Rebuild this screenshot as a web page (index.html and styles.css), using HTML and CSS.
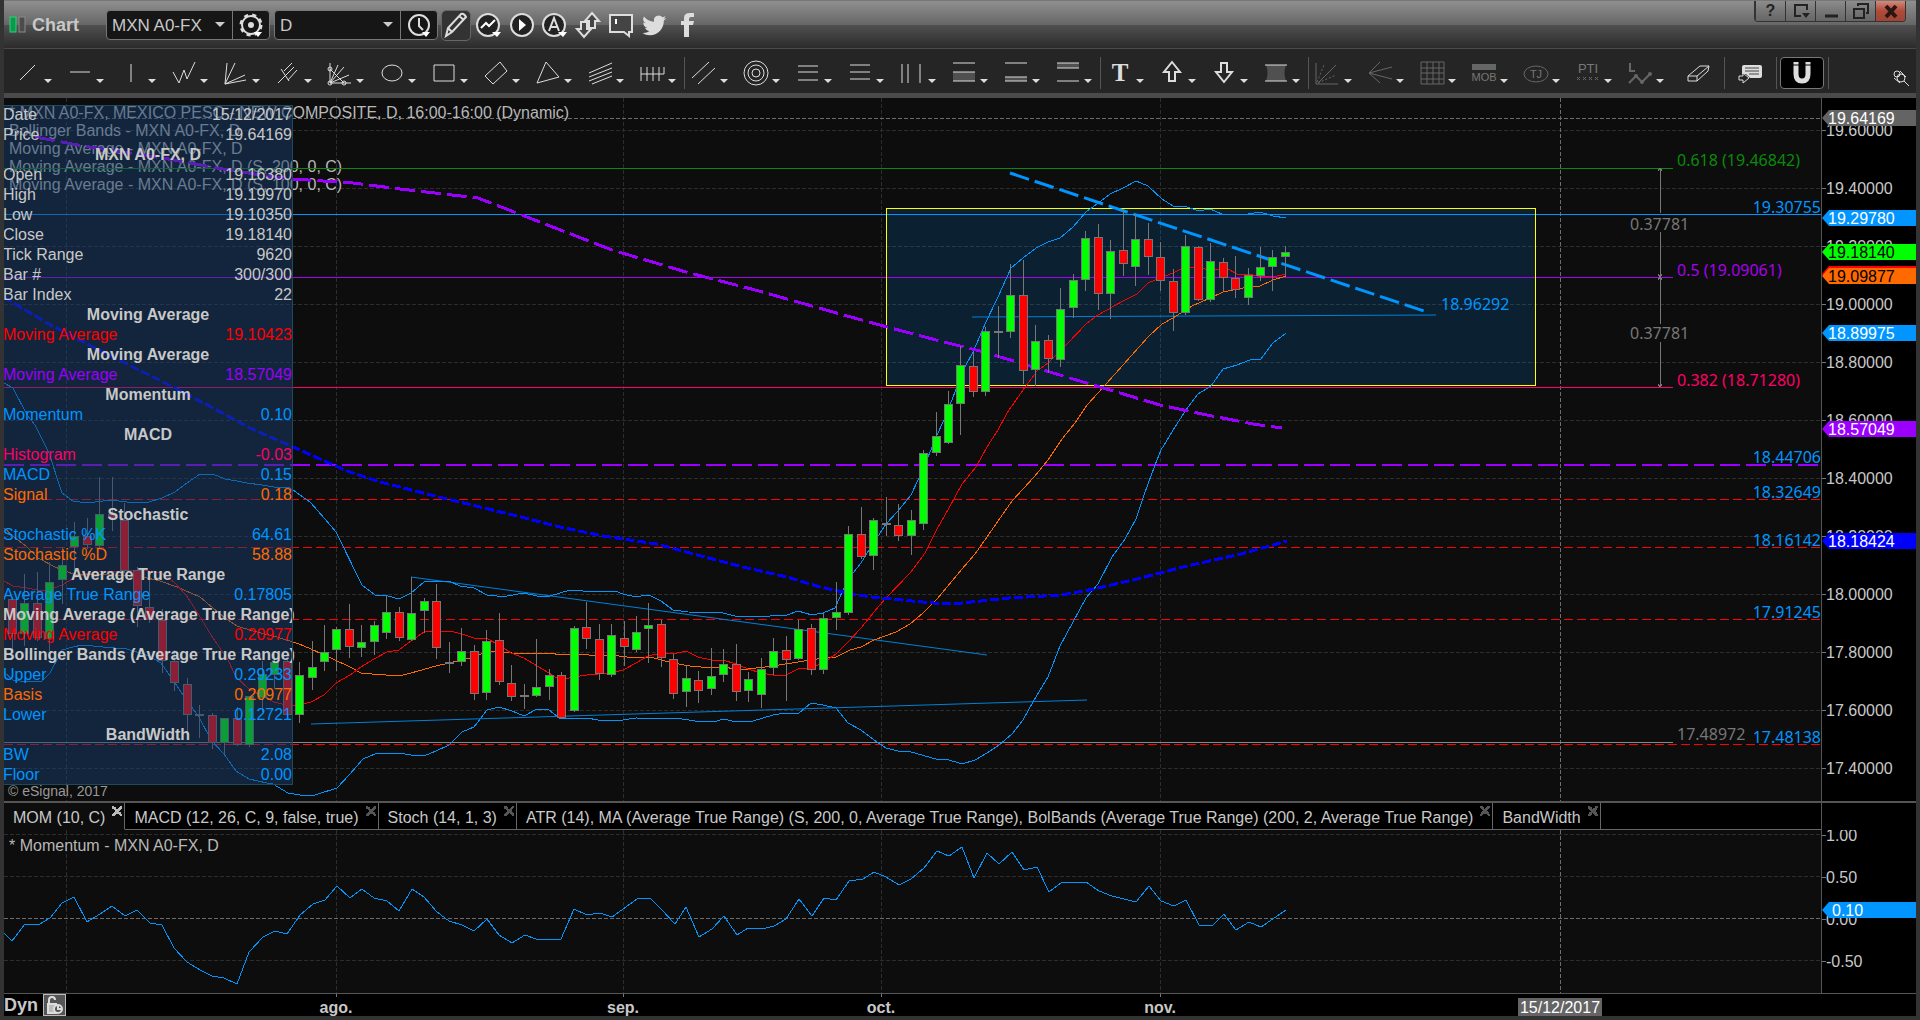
FILE: index.html
```
<!DOCTYPE html>
<html lang="en">
<head>
    <meta charset="UTF-8">
    <meta name="viewport" content="width=device-width, initial-scale=1.0">
    <title>Chart - MXN A0-FX</title>
    <link rel="stylesheet" href="styles.css">
</head>
<body>

    <!-- Title bar -->
    <header class="titlebar">
        <svg class="logo" width="18" height="18" viewBox="0 0 18 18"><rect x="1" y="1" width="6" height="15" fill="#0a9a4a" stroke="#2fd07c"/><rect x="10" y="1" width="6" height="15" fill="#4c4c4c" stroke="#8a8a8a"/></svg>
        <h1>Chart</h1>
        <div class="combo">
            <select aria-label="Symbol"><option>MXN A0-FX</option></select>
            <button aria-label="Symbol settings"><svg width="26" height="26" viewBox="0 0 26 26"><circle cx="12" cy="13" r="9" fill="none" stroke="#ddd" stroke-width="2"/><circle cx="12" cy="13" r="10" fill="none" stroke="#ddd" stroke-width="3" stroke-dasharray="4 4"/><circle cx="12" cy="13" r="3" fill="#ddd"/><path class="mark" d="M15 20h8l-4 5z"/></svg></button>
        </div>
        <div class="combo">
            <select aria-label="Interval"><option>D</option></select>
            <button aria-label="Time template"><svg width="26" height="26" viewBox="0 0 26 26"><circle cx="12" cy="13" r="10" fill="none" stroke="#ddd" stroke-width="2"/><path d="M12 6v8l4 4" fill="none" stroke="#ddd" stroke-width="2"/><path class="mark" d="M15 20h8l-4 5z"/></svg></button>
        </div>
        <nav class="actions">
            <button class="on" aria-label="Draw"><svg width="28" height="28" viewBox="0 0 28 28"><path d="M4 25l2-8L19 3q3-1 5 3L10 21zM6 17l4 4M17 5l5 4" fill="none" stroke="#ddd" stroke-width="2"/></svg></button>
            <button aria-label="Studies"><svg width="28" height="28" viewBox="0 0 28 28"><circle cx="13" cy="14" r="11" class="disc"/><path d="M6 17l5-5 3 3 6-6" fill="none" stroke="#fff" stroke-width="2"/><path class="mark" d="M17 21h9l-4 5z"/></svg></button>
            <button aria-label="Play"><svg width="28" height="28" viewBox="0 0 28 28"><circle cx="14" cy="14" r="11" class="disc"/><path d="M11 8l7 6-7 6z" fill="#fff"/></svg></button>
            <button aria-label="Alerts"><svg width="28" height="28" viewBox="0 0 28 28"><circle cx="13" cy="14" r="11" class="disc"/><path d="M8 20l5-13 5 13M10 16h7" fill="none" stroke="#ddd" stroke-width="2"/><path class="mark" d="M17 21h9l-4 5z"/></svg></button>
            <button aria-label="Transfer"><svg width="28" height="28" viewBox="0 0 28 28"><path d="M18 2l7 8h-4v7h-6v-7h-4zM7 11h6v7h4l-7 8-7-8h4z" fill="#444" stroke="#ddd" stroke-width="2"/></svg></button>
            <button aria-label="Notes"><svg width="28" height="28" viewBox="0 0 28 28"><path d="M3 4h22v17h-3v4l-5-4H3z" fill="#444" stroke="#ddd" stroke-width="2"/><path d="M9 8v5" stroke="#fff" stroke-width="2"/></svg></button>
            <button aria-label="Twitter"><svg width="28" height="28" viewBox="0 0 24 24"><path fill="#ddd" d="M22.500 5.900a8.500 8.500 0 0 1-2.400.7 4.200 4.200 0 0 0 1.800-2.300 8.500 8.500 0 0 1-2.600 1 4.200 4.200 0 0 0-7.200 3.900A12 12 0 0 1 3.400 4.800a4.200 4.200 0 0 0 1.300 5.600 4 4 0 0 1-1.900-.5v.1a4.200 4.200 0 0 0 3.400 4.100 4 4 0 0 1-1.900.1 4.200 4.200 0 0 0 3.900 2.900A8.500 8.500 0 0 1 2 18.800a12 12 0 0 0 6.400 1.900c7.700 0 12-6.500 12-12v-.6a8 8 0 0 0 2.100-2.200z"/></svg></button>
            <button aria-label="Facebook"><svg width="28" height="28" viewBox="0 0 28 28"><path fill="#ddd" d="M11 26V14H8v-4h3V7q0-5 6-5h4v4h-3q-2 0-2 2v2h5l-1 4h-4v12z"/></svg></button>
        </nav>
        <div class="window-buttons">
            <button aria-label="Help">?</button>
            <button aria-label="Dock"><svg width="18" height="18" viewBox="0 0 18 18"><path d="M9 14H3V3h12v5" fill="none" stroke="#222" stroke-width="2"/><path d="M10 11h8l-4 5z" fill="#222"/></svg></button>
            <button aria-label="Minimize"><svg width="18" height="18" viewBox="0 0 18 18"><path d="M3 14h13" stroke="#222" stroke-width="3"/></svg></button>
            <button aria-label="Restore"><svg width="18" height="18" viewBox="0 0 18 18"><path d="M2 7h10v9H2zM6 4V2h10v9h-2" fill="none" stroke="#222" stroke-width="2"/></svg></button>
            <button class="close" aria-label="Close"><svg width="18" height="18" viewBox="0 0 18 18"><path d="M4 4l10 11M14 4L4 15" stroke="#2a1512" stroke-width="4"/></svg></button>
        </div>
    </header>

    <!-- Drawing tools -->
    <nav class="toolbar">
        <div class="group">
            <button class="tool" aria-label="Trend line"><svg viewBox="0 0 28 28"><path d="M6 21L21 6"/></svg></button>
            <button class="tool" aria-label="Horizontal line"><svg viewBox="0 0 28 28"><path d="M4 13h20"/></svg></button>
            <button class="tool" aria-label="Vertical line"><svg viewBox="0 0 28 28"><path d="M13 5v18"/></svg></button>
            <button class="tool" aria-label="Poly line"><svg viewBox="0 0 28 28"><path d="M3 13l6 11 5-13 3 9 8-17"/></svg></button>
            <button class="tool" aria-label="Fan"><svg viewBox="0 0 28 28"><path d="M3 25L5 4M3 25L13 4M3 25l20-9M3 25l21-4"/></svg></button>
            <button class="tool" aria-label="Pitchfork"><svg viewBox="0 0 28 28"><path d="M4 24L20 8M10 12l8-8M14 21l9-10M7 10l8 12"/></svg></button>
            <button class="tool" aria-label="Gann"><svg viewBox="0 0 28 28"><path d="M4 4v20h21M4 24l8-18M4 24L18 8M4 24l19-8M4 10l14 14"/><circle cx="4" cy="10" r="2"/><circle cx="18" cy="24" r="2"/><circle cx="4" cy="24" r="2"/></svg></button>
            <button class="tool" aria-label="Ellipse"><svg viewBox="0 0 28 28"><ellipse cx="14" cy="14" rx="10" ry="8"/></svg></button>
            <button class="tool" aria-label="Rectangle"><svg viewBox="0 0 28 28"><path d="M4 6h20v16H4z"/></svg></button>
            <button class="tool" aria-label="Parallelogram"><svg viewBox="0 0 28 28"><path d="M3 17L18 3l7 9-14 13z"/></svg></button>
            <button class="tool" aria-label="Triangle"><svg viewBox="0 0 28 28"><path d="M12 3l13 15-22 6z"/></svg></button>
            <button class="tool" aria-label="Regression"><svg viewBox="0 0 28 28"><path d="M3 14L26 4M3 18L26 9M3 22l23-9M6 25l20-8"/></svg></button>
            <button class="tool" aria-label="Cycles"><svg viewBox="0 0 28 28"><path d="M3 8v14M9 8v14M15 8v14M21 8v14M3 15h23V8"/></svg></button>
        </div>
        <div class="group">
            <button class="tool" aria-label="Parallel lines"><svg viewBox="0 0 28 28"><path d="M2 19L19 3M8 25L25 9"/></svg></button>
            <button class="tool" aria-label="Fibonacci circles"><svg viewBox="0 0 28 28"><circle cx="14" cy="14" r="12"/><circle cx="14" cy="14" r="8"/><circle cx="14" cy="14" r="4"/></svg></button>
            <button class="tool" aria-label="Fibonacci extension"><svg viewBox="0 0 28 28"><path d="M4 7h20M4 13h20M4 21h20"/></svg></button>
            <button class="tool" aria-label="Fibonacci retracement"><svg viewBox="0 0 28 28"><path d="M4 6h20M4 13h20M4 20h20"/></svg></button>
            <button class="tool" aria-label="Fibonacci time"><svg viewBox="0 0 28 28"><path d="M4 5v19M10 5v19M22 5v19"/></svg></button>
            <button class="tool" aria-label="Lower range"><svg viewBox="0 0 28 28"><path class="shade" d="M3 13h22v9H3z"/><path d="M3 4h22M3 13h22M3 22h22"/></svg></button>
            <button class="tool" aria-label="Narrow range"><svg viewBox="0 0 28 28"><path class="shade" d="M3 18h22v4H3z"/><path d="M3 4h22M3 18h22M3 22h22"/></svg></button>
            <button class="tool" aria-label="Upper range"><svg viewBox="0 0 28 28"><path class="shade" d="M3 4h22v5H3z"/><path d="M3 4h22M3 9h22M3 22h22"/></svg></button>
        </div>
        <div class="group">
            <button class="tool" aria-label="Text"><svg viewBox="0 0 28 28"><text class="serif" x="14" y="22">T</text></svg></button>
            <button class="tool" aria-label="Arrow up"><svg viewBox="0 0 28 28"><path stroke-width="2" d="M14 3l8 10h-5v9h-6v-9H6z"/></svg></button>
            <button class="tool" aria-label="Arrow down"><svg viewBox="0 0 28 28"><path stroke-width="2" d="M14 23l8-10h-5V4h-6v9H6z"/></svg></button>
            <button class="tool" aria-label="Region"><svg viewBox="0 0 28 28"><path class="shade" d="M4 6h20q-3 8 0 16H4q3-8 0-16z"/><path d="M3 6h22M3 22h22"/></svg></button>
        </div>
        <div class="group">
            <button class="tool dim" aria-label="Speed lines"><svg viewBox="0 0 28 28"><path d="M2 4v21h22M4 24L22 6"/><path stroke-dasharray="2 2" d="M3 23L10 6M4 24l18-8"/></svg></button>
            <button class="tool dim" aria-label="Speed fan"><svg viewBox="0 0 28 28"><path d="M14 3L3 14l11 10M26 8L3 14l23 6"/></svg></button>
            <button class="tool dim" aria-label="Grid"><svg viewBox="0 0 28 28"><path d="M3 3h23v22H3zM9 3v22M15 3v22M21 3v22M3 9h23M3 14h23M3 20h23"/></svg></button>
            <button class="tool dim" aria-label="Make or break"><svg viewBox="0 0 28 28"><path class="bar" d="M2 5h24v6H2z"/><text x="14" y="22">MOB</text></svg></button>
            <button class="tool dim" aria-label="TJ ellipse"><svg viewBox="0 0 28 28"><ellipse cx="14" cy="15" rx="12" ry="8"/><text x="14" y="19">TJ</text></svg></button>
            <button class="tool dim" aria-label="Profit taking index"><svg viewBox="0 0 28 28"><text class="pti" x="14" y="14">PTI</text><path d="M3 18l3 3m0-3l-3 3M9 18l3 3m0-3l-3 3M15 18l3 3m0-3l-3 3M21 18l3 3m0-3l-3 3"/></svg></button>
            <button class="tool dim" aria-label="Elliott labels"><svg viewBox="0 0 28 28"><path stroke-width="2" d="M4 4v8h5M3 24l7-7 6 6 8-8"/><circle class="bar" cx="10" cy="17" r="2"/><circle class="bar" cx="16" cy="23" r="2"/><circle class="bar" cx="24" cy="15" r="2"/></svg></button>
            <button class="tool plain" aria-label="Erase"><svg viewBox="0 0 28 28"><path d="M4 17L16 7h9l-1 5-11 10H4zM4 17h9l12-10M13 17v5"/></svg></button>
        </div>
        <div class="group">
            <button class="tool plain" aria-label="Show labels"><svg viewBox="0 0 28 28"><path fill="#ddd" stroke="none" d="M8 6h16q2 0 2 2v9q0 2-2 2H14l-4-4H6V8q0-2 2-2z"/><path stroke="#444" d="M9 9h14M9 12h14M13 15h10"/><path fill="#252525" d="M3 17h4v-3l6 5-6 5v-3H3z"/></svg></button>
        </div>
        <div class="group">
            <button class="tool plain magnet" aria-label="Magnet"><svg viewBox="0 0 28 28"><path stroke-width="5" d="M8 3v12q0 7 6 7t6-7V3"/><path stroke="#000" d="M5 6h6M17 6h6"/></svg></button>
        </div>
        <button class="pin" aria-label="Pin toolbar"><svg width="18" height="18" viewBox="0 0 18 18" fill="none" stroke="#ddd"><circle cx="5" cy="5" r="3"/><circle cx="9" cy="9" r="4"/><path d="M8 2l6 6M2 9l6 5M12 12l5 5"/></svg></button>
    </nav>

    <!-- Price pane -->
    <main class="pane price-pane">
        <svg class="plot" id="pricePlot">
            <g id="priceGrid" transform="translate(0 -98)"></g>

            <g class="caption" transform="translate(0 -98)">
                <text x="5" y="118">* MXN A0-FX, MEXICO PESO - NEW COMPOSITE, D, 16:00-16:00 (Dynamic)</text>
                <text x="5" y="136">Bollinger Bands - MXN A0-FX, D</text>
                <text x="5" y="154">Moving Average - MXN A0-FX, D</text>
                <text x="5" y="172">Moving Average - MXN A0-FX, D (S, 200, 0, C)</text>
                <text x="5" y="190">Moving Average - MXN A0-FX, D (S, 100, 0, C)</text>
            </g>

            <g transform="translate(-4 -98)">
                <rect x="886" y="208" width="649" height="177" fill="#0095ff" fill-opacity="0.15"/>
            </g>

            <!-- Support and resistance levels -->
            <g class="crisp" transform="translate(0 -98)">
                <path stroke="#0a8a0a" d="M0 168H1669"/>
                <line stroke="#0095ff" x1="0" x2="100%" y1="214" y2="214"/>
                <path stroke="#a800f0" d="M0 277H1669"/>
                <path stroke="#ff0066" d="M0 387H1669"/>
                <line stroke="#9b00ff" stroke-width="2" stroke-dasharray="20 6" x1="0" x2="100%" y1="465" y2="465"/>
                <g stroke="#f00" stroke-dasharray="9 4">
                    <line x1="0" x2="100%" y1="499" y2="499"/>
                    <line x1="0" x2="100%" y1="547" y2="547"/>
                    <line x1="0" x2="100%" y1="619" y2="619"/>
                    <line x1="0" x2="100%" y1="744" y2="744"/>
                </g>
                <path stroke="#888" d="M0 742H1669"/>
            </g>

            <g transform="translate(-4 -98)" fill="none">
                <rect class="crisp" x="886" y="208" width="649" height="177" stroke="#ff0"/>
                <g stroke="#0080d8">
                    <path d="M411 577L987 655M311 724L1087 700M972 317L1436 315"/>
                    <path stroke="#0095ff" stroke-width="3" stroke-dasharray="20 6" d="M1010 173L1424 311"/>
                </g>

                <!-- Bollinger bands, moving averages -->
                <g class="crisp">
                    <polyline stroke="#0095ff" points="4,383 13,388 27,415 35,425 49,453 62,493 73,501 87,503 111,500 127,502 149,502 162,498 175,492 187,483 200,474 213,474 225,479 237,481 247,483 262,485 274,487 288,487 293,490 310,502 325,519 336,532 362,585 375,595 388,596 399,599 411,593 424,582 430,581 449,581 460,586 474,588 487,595 497,596 507,596 524,593 537,596 550,596 570,590 583,591 615,591 623,594 636,597 647,595 651,596 661,601 673,610 688,612 723,613 735,616 770,616 787,615 798,611 812,615 823,613 835,608 843,590 853,573 861,563 869,550 886,524 898,511 911,495 919,478 928,457 937,435 944,420 957,387 965,367 973,352 986,322 998,297 1011,268 1023,258 1036,248 1048,242 1060,238 1073,227 1087,211 1093,207 1110,194 1123,188 1136,181 1148,186 1162,199 1173,206 1187,207 1199,211 1210,209 1222,214 1248,214 1260,212 1273,216 1286,218"/>
                    <polyline stroke="#0095ff" points="4,672 13,680 27,682 42,681 50,673 62,650 73,647 82,645 103,647 127,649 137,652 149,656 161,663 173,680 187,701 199,717 211,740 224,754 236,771 249,779 267,783 273,784 288,793 300,795 315,795 337,788 350,774 363,759 375,754 399,753 411,755 424,756 436,751 449,745 462,732 474,727 487,710 499,707 512,711 524,716 537,709 549,710 561,719 587,718 598,720 623,720 636,718 682,719 695,721 713,722 724,719 736,722 753,721 773,715 786,713 799,713 811,703 823,705 836,708 848,723 861,730 874,740 886,748 898,751 911,752 936,759 946,759 962,764 975,760 987,753 999,745 1012,734 1023,720 1033,702 1048,677 1060,646 1073,622 1086,598 1098,584 1112,557 1125,539 1136,519 1144,495 1155,465 1161,450 1175,427 1186,410 1198,394 1211,386 1223,369 1237,365 1250,360 1261,359 1273,343 1286,333"/>
                    <polyline stroke="#ff6a00" points="4,528 13,536 27,547 38,558 55,567 73,574 100,574 143,577 160,581 177,587 200,597 213,608 225,618 237,626 253,631 277,637 299,644 311,649 333,659 350,667 361,673 372,674 399,676 411,673 436,666 449,663 474,657 486,652 495,651 512,653 524,654 550,653 561,655 580,654 597,656 611,655 627,657 650,657 673,663 690,666 711,668 723,667 736,669 748,669 773,666 798,662 817,659 836,657 850,650 861,647 874,640 896,632 910,624 923,613 937,599 962,569 975,554 987,537 998,521 1012,501 1034,477 1048,460 1062,439 1075,423 1087,405 1098,393 1123,365 1148,337 1162,324 1173,318 1192,306 1210,298 1223,292 1243,288 1260,286 1273,280 1286,276"/>
                    <polyline stroke="#f00" points="4,581 13,586 27,588 37,590 49,590 62,585 74,578 86,574 99,572 143,570 161,573 174,582 186,595 199,615 211,635 228,660 236,677 249,689 262,696 274,702 286,705 299,705 311,702 324,695 336,683 350,675 361,667 374,659 387,652 399,650 411,641 424,632 436,631 450,631 462,634 474,638 486,638 499,645 511,653 524,658 537,666 549,673 560,680 573,677 587,675 598,674 611,673 623,670 636,663 648,656 661,653 673,654 686,651 698,657 711,660 723,660 736,664 748,669 761,673 773,675 786,675 798,669 811,668 823,663 836,654 848,642 861,628 874,612 886,598 911,572 925,553 937,529 949,508 962,484 976,467 987,447 998,430 1007,413 1023,390 1037,371 1048,363 1067,344 1087,323 1098,315 1123,301 1137,294 1148,283 1160,278 1173,273 1183,268 1195,267 1205,269 1228,269 1237,274 1248,274 1257,276 1273,277 1286,274"/>
                    <polyline stroke="#00f" stroke-width="3" stroke-dasharray="9 3" points="4,297 17,305 47,323 93,347 133,367 173,387 213,408 250,428 293,447 347,471 380,482 443,498 513,515 560,527 603,536 657,544 697,555 747,568 787,577 820,587 857,595 880,598 934,603 962,603 1009,598 1062,595 1094,589 1137,579 1187,566 1241,554 1287,541"/>
                    <polyline stroke="#9b00ff" stroke-width="3" stroke-dasharray="20 6" points="35,137 83,146 163,158 217,168 267,176 293,179 353,183 400,189 478,198 527,217 612,250 686,272 759,291 840,314 887,327 940,341 980,351 1017,362 1053,373 1100,387 1160,405 1207,415 1253,424 1282,428"/>
                </g>
            </g>

            <g id="candles" transform="translate(-4 -98)"></g>

            <!-- Fibonacci labels -->
            <g class="level" transform="translate(-4 -98)">
                <path class="crisp" fill="none" stroke="#777" d="M1660 168V213M1660 232V324M1660 342V387M1658 171l2-3 2 3M1658 274l2 3 2-3M1658 280l2-3 2 3M1658 384l2 3 2-3"/>
                <text x="1677" y="166" fill="#0a8a0a">0.618 (19.46842)</text>
                <text x="1677" y="276" fill="#a800f0">0.5 (19.09061)</text>
                <text x="1677" y="386" fill="#ff0066">0.382 (18.71280)</text>
                <text x="1630" y="230" fill="#777">0.37781</text>
                <text x="1630" y="339" fill="#777">0.37781</text>
                <text x="1441" y="310" fill="#0095ff">18.96292</text>
                <text x="1677" y="740" fill="#777">17.48972</text>
            </g>
            <g class="level" transform="translate(0 -98)" fill="#0095ff" text-anchor="end">
                <text x="100%" y="213">19.30755</text>
                <text x="100%" y="463">18.44706</text>
                <text x="100%" y="498">18.32649</text>
                <text x="100%" y="546">18.16142</text>
                <text x="100%" y="618">17.91245</text>
                <text x="100%" y="743">17.48138</text>
            </g>
            <text class="copyright" x="4" y="698">© eSignal, 2017</text>
        </svg>
        <svg class="axis" id="priceAxis"></svg>

        <!-- Cursor window -->
        <table class="cursor-window">
            <tr><td>Date</td><td>15/12/2017</td></tr>
            <tr><td>Price</td><td>19.64169</td></tr>
            <tr><th colspan="2">MXN A0-FX, D</th></tr>
            <tr><td>Open</td><td>19.16380</td></tr>
            <tr><td>High</td><td>19.19970</td></tr>
            <tr><td>Low</td><td>19.10350</td></tr>
            <tr><td>Close</td><td>19.18140</td></tr>
            <tr><td>Tick Range</td><td>9620</td></tr>
            <tr><td>Bar #</td><td>300/300</td></tr>
            <tr><td>Bar Index</td><td>22</td></tr>
            <tr><th colspan="2">Moving Average</th></tr>
            <tr class="red"><td>Moving Average</td><td>19.10423</td></tr>
            <tr><th colspan="2">Moving Average</th></tr>
            <tr class="purple"><td>Moving Average</td><td>18.57049</td></tr>
            <tr><th colspan="2">Momentum</th></tr>
            <tr class="blue"><td>Momentum</td><td>0.10</td></tr>
            <tr><th colspan="2">MACD</th></tr>
            <tr class="pink"><td>Histogram</td><td>-0.03</td></tr>
            <tr class="blue"><td>MACD</td><td>0.15</td></tr>
            <tr class="orange"><td>Signal</td><td>0.18</td></tr>
            <tr><th colspan="2">Stochastic</th></tr>
            <tr class="blue"><td>Stochastic %K</td><td>64.61</td></tr>
            <tr class="orange"><td>Stochastic %D</td><td>58.88</td></tr>
            <tr><th colspan="2">Average True Range</th></tr>
            <tr class="blue"><td>Average True Range</td><td>0.17805</td></tr>
            <tr><th colspan="2">Moving Average (Average True Range)</th></tr>
            <tr class="red"><td>Moving Average</td><td>0.20977</td></tr>
            <tr><th colspan="2">Bollinger Bands (Average True Range)</th></tr>
            <tr class="blue"><td>Upper</td><td>0.29233</td></tr>
            <tr class="orange"><td>Basis</td><td>0.20977</td></tr>
            <tr class="blue"><td>Lower</td><td>0.12721</td></tr>
            <tr><th colspan="2">BandWidth</th></tr>
            <tr class="blue"><td>BW</td><td>2.08</td></tr>
            <tr class="blue"><td>Floor</td><td>0.00</td></tr>
        </table>
    </main>

    <!-- Study tabs -->
    <div class="pane tab-pane">
        <div class="tabs">
            <div class="tab active"><button>MOM (10, C)</button><button class="x" aria-label="Close MOM"></button></div>
            <div class="tab"><button>MACD (12, 26, C, 9, false, true)</button><button class="x" aria-label="Close MACD"></button></div>
            <div class="tab"><button>Stoch (14, 1, 3)</button><button class="x" aria-label="Close Stoch"></button></div>
            <div class="tab"><button>ATR (14), MA (Average True Range) (S, 200, 0, Average True Range), BolBands (Average True Range) (200, 2, Average True Range)</button><button class="x" aria-label="Close ATR"></button></div>
            <div class="tab"><button>BandWidth</button><button class="x" aria-label="Close BandWidth"></button></div>
        </div>
        <div class="axis"></div>
    </div>

    <!-- Momentum pane -->
    <section class="pane momentum-pane">
        <svg class="plot">
            <g id="momentumGrid" transform="translate(0 -830)"></g>
            <polyline class="crisp" transform="translate(-4 -830)" fill="none" stroke="#0095ff" points="4,933 12,941 25,924 38,925 50,918 62,903 74,897 87,922 100,914 112,906 125,916 137,910 150,923 162,925 174,948 187,962 200,970 212,976 224,978 237,984 249,952 263,937 275,931 287,934 300,915 313,904 325,900 337,886 350,898 362,889 374,898 387,901 399,911 412,889 424,897 437,912 449,921 462,925 474,931 487,919 499,935 512,943 525,935 536,939 548,940 561,939 574,909 587,915 600,913 612,917 637,899 650,898 661,909 675,924 686,907 699,937 712,929 724,916 737,935 748,928 762,929 774,926 786,919 799,899 812,916 824,898 836,900 849,881 863,879 874,872 886,877 899,885 911,879 924,868 937,851 949,856 962,847 974,878 987,853 999,864 1012,852 1024,870 1037,867 1049,892 1062,882 1086,882 1099,891 1112,896 1124,899 1136,902 1149,886 1161,901 1174,906 1186,900 1199,925 1212,926 1224,914 1236,930 1249,922 1261,927 1286,910"/>
            <text class="caption" x="5" y="21">* Momentum - MXN A0-FX, D</text>
        </svg>
        <svg class="axis" id="momentumAxis"></svg>
    </section>

    <!-- Time axis -->
    <footer class="time-pane">
        <span class="dyn">Dyn</span>
        <button class="lock" aria-label="Lock time axis"><svg width="22" height="22" viewBox="0 0 22 22" fill="none" stroke="#ddd" stroke-width="2"><path d="M6 10V6q0-3 3-3t3 3"/><path fill="#bbb" d="M5 10h8v9H5z"/><circle cx="15" cy="15" r="4" fill="#555"/><path d="M15 12v3h3"/></svg></button>
        <svg id="timeAxis"></svg>
    </footer>

    <script src="chart.js"></script>
</body>
</html>
```
FILE: styles.css
```
* {
    box-sizing: border-box;
}
body {
    margin: 0;
    min-height: 100vh;
    display: flex;
    flex-direction: column;
    background-color: #0d0d0d;
    color: #c8c8c8;
    font-family: "Liberation Sans", Arial, sans-serif;
    font-size: 16px;
    border: 4px solid #333;
    border-top: 0;
}
button, select {
    margin: 0;
    padding: 0;
    border: 0;
    background: none;
    color: inherit;
    font: inherit;
}
svg {
    display: block;
}

/* Title bar */
.titlebar {
    display: flex;
    align-items: center;
    height: 49px;
    margin: 0 -4px;
    padding: 0 14px 0 9px;
    border-top: 1px solid #777;
    background: linear-gradient(#8f8f8f, #666 50%, #505050 50%, #2b2b2b 98%, #4a4a4a 98%);
}
.titlebar h1 {
    margin: 0 27px 0 5px;
    width: 47px;
    font-size: 18px;
}
.combo {
    position: relative;
    display: flex;
    width: 164px;
    height: 30px;
    margin-right: 4px;
    background-color: #161616;
    border: 1px solid #777;
    border-radius: 4px;
}
.combo select {
    flex: 1;
    padding-left: 5px;
    appearance: none;
    font-size: 17px;
    border-right: 1px solid #777;
}
.combo::after {
    content: "";
    position: absolute;
    right: 44px;
    top: 11px;
    border: 5px solid transparent;
    border-top-color: #ccc;
    border-bottom: 0;
    pointer-events: none;
}
.combo button {
    width: 36px;
    padding-left: 6px;
}
.mark {
    fill: #fff;
}
.disc {
    fill: #222;
    stroke: #ddd;
    stroke-width: 2;
}
.actions {
    display: flex;
    gap: 5px;
}
.actions button {
    width: 28px;
    height: 29px;
    border-radius: 4px;
}
.actions .on {
    background-color: #333;
    outline: 1px solid #666;
}
.window-buttons {
    display: flex;
    align-self: flex-start;
    height: 21px;
    margin-left: auto;
    border: 1px solid #333;
    border-top: 0;
    border-radius: 0 0 4px 4px;
    overflow: hidden;
    color: #222;
    font-weight: bold;
}
.window-buttons button {
    display: flex;
    align-items: center;
    justify-content: center;
    width: 30px;
    border-left: 1px solid #333;
    background: linear-gradient(#8c8c8c, #777 50%, #666);
}
.window-buttons .close {
    background: linear-gradient(#d08a7c, #b04a38 50%, #a04434);
}

/* Drawing tools */
.toolbar {
    display: flex;
    align-items: center;
    height: 49px;
    padding: 3px 0 0 4px;
    background-color: #252525;
    border-bottom: 5px solid #4a4a4a;
}
.group {
    display: flex;
}
.group + .group, .pin {
    position: relative;
}
.group + .group::before, .pin::before {
    content: "";
    position: absolute;
    left: 0;
    top: 0;
    width: 1px;
    height: 32px;
    background-color: #555;
}
.tool {
    display: flex;
    align-items: center;
    width: 52px;
    height: 32px;
    padding-left: 6px;
}
.tool svg {
    width: 28px;
    height: 28px;
    fill: none;
    stroke: #ddd;
    stroke-width: 1;
}
.tool::after {
    content: "";
    align-self: flex-end;
    margin: 0 0 6px 2px;
    border: 4px solid transparent;
    border-top-color: #ddd;
    border-bottom: 0;
}
.tool.plain {
    justify-content: center;
    padding: 0;
}
.tool.plain::after {
    display: none;
}
.tool.dim svg {
    stroke: #666;
}
.tool text {
    fill: #777;
    stroke: none;
    font-size: 11px;
    text-anchor: middle;
}
.tool .serif {
    fill: #ddd;
    font-family: "Liberation Serif", serif;
    font-weight: bold;
    font-size: 25px;
}
.tool .pti {
    font-size: 13px;
}
.tool .shade {
    fill: #505050;
    stroke: none;
}
.tool .bar {
    fill: #666;
    stroke: none;
}
.tool.magnet {
    width: 44px;
    margin: 0 4px;
    background-color: #000;
    border: 1px solid #777;
    border-radius: 4px;
}
.pin {
    display: flex;
    flex: 1;
    align-items: center;
    justify-content: flex-end;
    height: 32px;
    padding: 10px 6px 0 0;
}

/* Chart panes */
.pane {
    position: relative;
    display: grid;
    grid-template-columns: 1fr 95px;
}
.price-pane {
    flex: 1;
    min-height: 703px;
}
.plot, .axis {
    width: 100%;
    height: 100%;
}
.axis {
    background-color: #000;
    border-left: 1px solid #555;
}
.axis text {
    fill: #c8c8c8;
}
.crisp {
    shape-rendering: crispEdges;
}
.grid {
    stroke: #2d2d2d;
    stroke-dasharray: 4 2;
    shape-rendering: crispEdges;
}
.cursor {
    stroke: #6c6c6c;
    stroke-dasharray: 4 2;
    shape-rendering: crispEdges;
}
.caption {
    fill: #b8b8b8;
}
.copyright {
    fill: #999;
    font-size: 14px;
}
.level {
    font-family: "Noto Sans", sans-serif;
}

/* Cursor window lies over the left part of the chart */
.cursor-window {
    position: absolute;
    left: -1px;
    top: 7px;
    width: 290px;
    table-layout: fixed;
    border-spacing: 0;
    outline: 1px solid #1e4a60;
    outline-offset: -1px;
    background-color: rgba(23, 61, 107, 0.5);
    line-height: 20px;
    white-space: nowrap;
}
.cursor-window td, .cursor-window th {
    padding: 0;
}
.cursor-window td + td {
    padding-right: 1px;
    text-align: right;
}
.red { color: #f00; }
.purple { color: #9b00ff; }
.blue { color: #0095ff; }
.orange { color: #ff6a00; }
.pink { color: #ff0066; }
.cursor-window th { color: #c8c8c8; }

/* Study tabs */
.tab-pane {
    height: 29px;
    border-top: 2px solid #555;
}
.tabs {
    display: flex;
    background-color: #000;
}
.tabs::after {
    content: "";
    flex: 1;
    border-bottom: 1px solid #666;
}
.tab {
    display: flex;
    align-items: center;
    gap: 7px;
    padding: 3px 2px 0 9px;
    border-right: 1px solid #666;
    border-bottom: 1px solid #666;
    white-space: nowrap;
}
.tab.active {
    background-color: #0d0d0d;
    border-bottom-color: #0d0d0d;
}
.x {
    align-self: flex-start;
    width: 10px;
    height: 10px;
    background: linear-gradient(45deg, transparent 40%, #555 40%, #555 60%, transparent 60%), linear-gradient(-45deg, transparent 40%, #555 40%, #555 60%, transparent 60%);
}
.active .x {
    background: linear-gradient(45deg, transparent 40%, #bbb 40%, #bbb 60%, transparent 60%), linear-gradient(-45deg, transparent 40%, #bbb 40%, #bbb 60%, transparent 60%);
}
.momentum-pane {
    height: 163px;
}

/* Time axis */
.time-pane {
    position: relative;
    display: flex;
    height: 27px;
    margin-bottom: -4px;
    background-color: #000;
    border-top: 1px solid #555;
    border-bottom: 4px solid #333;
}
.dyn {
    font-size: 18px;
    font-weight: bold;
    line-height: 22px;
    width: 39px;
}
.lock {
    width: 23px;
    height: 22px;
    background-color: #555;
    outline: 1px solid #bbb;
    outline-offset: -1px;
}
#timeAxis {
    position: absolute;
    left: 0;
    top: 0;
    width: 100%;
    height: 100%;
    pointer-events: none;
    font-weight: bold;
    fill: #c8c8c8;
    text-anchor: middle;
}
#timeAxis .date {
    font-weight: normal;
    fill: #fff;
}
```
FILE: chart.js
```
const SVG = 'http://www.w3.org/2000/svg';

function add(parent, name, attrs, text) {
    const el = document.createElementNS(SVG, name);
    for (const key in attrs) {
        el.setAttribute(key, attrs[key]);
    }
    if (text) el.textContent = text;
    parent.appendChild(el);
    return el;
}

// Grid lines
const months = [66, 336, 623, 881, 1160];
const cursorX = 1560;

function drawGrid(id, rows, top, cursorY) {
    const g = document.getElementById(id);
    rows.forEach(y => add(g, 'line', { class: 'grid', x1: 0, x2: '100%', y1: y, y2: y }));
    months.forEach(x => add(g, 'line', { class: 'grid', x1: x - 4, x2: x - 4, y1: top, y2: 1020 }));
    add(g, 'line', { class: 'cursor', x1: cursorX - 4, x2: cursorX - 4, y1: top, y2: 1020 });
    add(g, 'line', { class: 'cursor', x1: 0, x2: '100%', y1: cursorY, y2: cursorY });
}

const priceRows = [];
for (let i = 0; i < 12; i++) priceRows.push(130 + i * 58);
drawGrid('priceGrid', priceRows, 98, 118);
drawGrid('momentumGrid', [834, 876, 960], 830, 918);

// Candles: high, body top, body bottom, low, type (1 up, 0 down, 2 doji)
const candles = [
    [597,599,634,648,0], [574,603,634,645,1], [572,603,638,640,0], [562,582,639,650,1],
    [547,565,580,603,1], [522,536,547,570,1], [518,536,545,548,0], [477,514,546,548,1],
    [477,514,518,530,0], [503,520,571,572,0], [567,570,606,626,0], [580,607,619,622,0],
    [609,620,661,672,0], [650,661,683,690,0], [678,684,715,731,0], [705,714,716,737,2],
    [713,715,743,748,0], [718,718,743,754,1], [707,718,745,745,0], [696,696,745,746,1],
    [661,674,698,711,1], [654,662,675,688,1], [660,661,715,716,0], [662,675,715,722,1],
    [641,667,678,689,1], [625,652,662,670,1], [627,629,650,670,1], [604,629,647,657,0],
    [625,642,648,656,1], [621,625,642,654,1], [596,612,633,638,1], [607,612,638,640,0],
    [577,613,640,640,1], [598,601,611,632,1], [584,601,648,658,0], [642,662,664,672,2],
    [628,651,662,665,1], [645,651,694,699,0], [630,641,693,699,1], [613,640,682,684,0],
    [665,683,697,700,0], [684,695,697,708,2], [639,687,696,696,1], [669,675,687,699,1],
    [672,675,718,718,0], [626,628,711,711,1], [602,627,639,648,0], [624,639,674,679,0],
    [624,635,675,676,1], [621,638,647,665,0], [616,632,650,651,1], [603,625,629,662,1],
    [620,624,658,666,0], [654,659,694,698,0], [665,678,692,706,1], [671,680,691,702,0],
    [648,676,689,694,1], [649,664,675,681,1], [644,664,692,700,0], [672,679,691,701,1],
    [658,669,695,707,1], [638,651,668,674,1], [636,650,660,700,0], [620,629,659,659,1],
    [624,628,670,674,0], [613,618,670,673,1], [582,612,618,629,1], [526,534,613,614,1],
    [507,534,557,558,0], [518,520,556,569,1], [497,523,525,535,2], [504,525,536,540,0],
    [510,520,536,554,1], [450,453,524,529,1], [412,436,453,455,1], [391,404,443,443,1],
    [346,365,404,434,1], [352,366,392,396,0], [327,331,392,395,1], [306,331,333,357,2],
    [264,295,332,337,1], [260,295,371,383,0], [325,341,370,385,1], [335,340,359,372,0],
    [288,309,360,366,1], [274,280,308,317,1], [231,238,280,290,1], [224,237,294,309,0],
    [240,251,294,318,1], [209,250,264,275,0], [214,239,267,285,1], [223,239,257,274,0],
    [242,257,281,290,0], [269,281,313,330,0], [235,246,313,314,1], [246,247,300,300,0],
    [243,261,300,301,1], [258,262,278,290,0], [256,278,290,297,0], [268,275,298,304,1],
    [247,267,276,280,1], [250,257,267,290,1], [246,252,257,275,1]
];
const colors = ['#ff0000', '#00ff00', '#777777'];
const candleGroup = document.getElementById('candles');
candles.forEach(([high, top, bottom, low, type], i) => {
    const x = Math.round(12 + i * 12.48);
    add(candleGroup, 'rect', { x: x, y: high, width: 1, height: low - high + 1, fill: '#777' });
    add(candleGroup, 'rect', { x: x - 4, y: top, width: 9, height: bottom - top, fill: '#777' });
    if (bottom - top > 2) {
        add(candleGroup, 'rect', { x: x - 3, y: top + 1, width: 7, height: bottom - top - 2, fill: colors[type] });
    }
});

// Value axes
function drawAxis(id, offset, labels, tags) {
    const g = add(document.getElementById(id), 'g', { transform: `translate(0 ${-offset})` });
    labels.forEach(([y, text]) => {
        add(g, 'rect', { x: 0, y: y, width: 4, height: 1, fill: '#777' });
        add(g, 'text', { x: 4, y: y + 6 }, text);
    });
    tags.forEach(([y, text, fill, color]) => {
        add(g, 'path', { d: `M0 ${y}l7 -8h90v16h-90z`, fill: fill });
        add(g, 'text', { x: text.length < 5 ? 10 : 6, y: y + 6, style: `fill:${color}` }, text);
    });
}

drawAxis('priceAxis', 98, priceRows.map((y, i) => [y, (19.6 - i * 0.2).toFixed(5)]), [
    [118, '19.64169', '#646464', '#fff'],
    [218, '19.29780', '#0095ff', '#fff'],
    [252, '19.18140', '#00ff00', '#000'],
    [274, '', '#ff0000', '#000'],
    [276, '19.09877', '#ff6a00', '#000'],
    [333, '18.89975', '#0095ff', '#fff'],
    [429, '18.57049', '#9b00ff', '#fff'],
    [541, '18.18424', '#0000ff', '#fff']
]);
drawAxis('momentumAxis', 830, [[835, '1.00'], [877, '0.50'], [919, '0.00'], [961, '-0.50']], [
    [910, '0.10', '#0095ff', '#fff']
]);

// Time axis
const timeAxis = document.getElementById('timeAxis');
['ago.', 'sep.', 'oct.', 'nov.'].forEach((name, i) => {
    const x = months[i + 1] - 4;
    add(timeAxis, 'rect', { x: x, y: 0, width: 1, height: 3, fill: '#777' });
    add(timeAxis, 'text', { x: x, y: 19 }, name);
});
add(timeAxis, 'rect', { x: cursorX - 46, y: 4, width: 84, height: 18, fill: '#646464' });
add(timeAxis, 'text', { class: 'date', x: cursorX - 4, y: 19 }, '15/12/2017');
```
